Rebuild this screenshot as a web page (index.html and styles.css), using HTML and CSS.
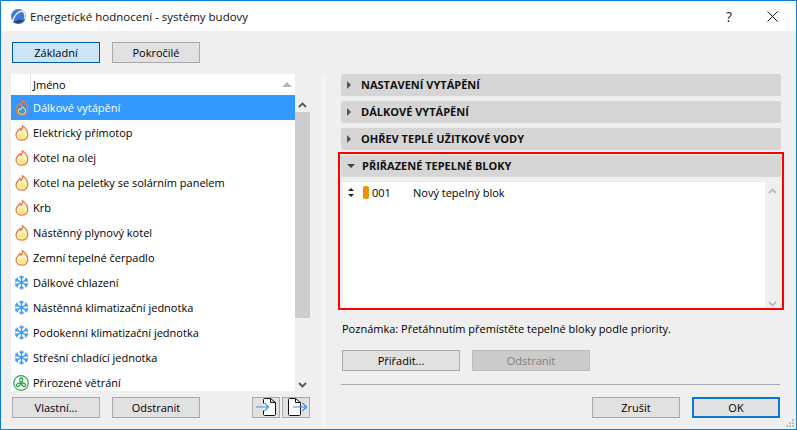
FILE: index.html
```html
<!DOCTYPE html>
<html lang="cs">
<head>
<meta charset="utf-8">
<title>Energetické hodnocení - systémy budovy</title>
<link rel="stylesheet" href="styles.css">
</head>
<body>
<svg class="defs" width="0" height="0" aria-hidden="true">
  <symbol id="flame" viewBox="0 0 16 18">
    <path d="M8.500 .8C9.300 3.400 7.600 4.600 6.900 5.800 6.500 5.200 6.200 4.700 6 4 3.600 6 1.200 8.400 1.200 11.300 1.200 14.800 4.100 17.200 7.700 17.200 11.400 17.200 14.600 14.800 14.600 11.100 14.600 7.200 11.800 3 8.500 .8Z" fill="#fff7d0" stroke="#e8784a" stroke-width="1.500"/>
    <path d="M8.300 7.500C8.600 9 7 9.800 6.300 10.900 5.700 10.500 5.500 10.200 5.300 9.800 4.200 10.800 3.700 11.800 3.700 12.800 3.700 14.900 5.500 16 7.800 16 10.200 16 12.200 14.800 12.200 12.500 12.200 10.700 10.300 8.700 8.300 7.500Z" fill="#ffe97a"/>
  </symbol>
  <symbol id="flame-sel" viewBox="0 0 16 18">
    <path d="M8.500 .8C9.300 3.400 7.600 4.600 6.900 5.800 6.500 5.200 6.200 4.700 6 4 3.600 6 1.200 8.400 1.200 11.300 1.200 14.800 4.100 17.200 7.700 17.200 11.400 17.200 14.600 14.800 14.600 11.100 14.600 7.200 11.800 3 8.500 .8Z" fill="#3a8fe0" stroke="#e8784a" stroke-width="1.500"/>
    <path d="M8.300 7.500C8.600 9 7 9.800 6.300 10.900 5.700 10.500 5.500 10.200 5.300 9.800 4.200 10.800 3.700 11.800 3.700 12.800 3.700 14.900 5.500 16 7.800 16 10.200 16 12.200 14.800 12.200 12.500 12.200 10.700 10.300 8.700 8.300 7.500Z" fill="#3a95ea" stroke="#f2d95a" stroke-width="1.200"/>
  </symbol>
  <symbol id="snow" viewBox="0 0 16 16">
    <g stroke="#3d9bf0" stroke-width="1.500" fill="none">
      <path d="M8 .5V15.500M1.500 4.300 14.500 11.700M14.500 4.300 1.500 11.700"/>
      <path d="M5.800 1.500 8 3.600 10.200 1.500M5.800 14.500 8 12.400 10.200 14.500M.9 6.800 3.900 5.800 3.200 2.800M15.100 9.200 12.100 10.200 12.800 13.200M15.100 6.800 12.100 5.800 12.800 2.800M.9 9.200 3.900 10.200 3.200 13.200"/>
    </g>
  </symbol>
  <symbol id="fan" viewBox="0 0 16 16">
    <circle cx="8" cy="8" r="7.300" fill="#fff" stroke="#2ea44f" stroke-width="1.200"/>
    <g fill="none" stroke="#2ea44f" stroke-width="1.300">
      <path d="M8 7.600C6.200 6.200 6.200 3.200 8.200 3 10.200 3 10.400 5.800 8 7.600Z"/>
      <path d="M8.300 8.200C10.400 7.600 12.800 8.600 12.600 10.400 12.200 12.200 9.400 12 8.300 8.200Z"/>
      <path d="M7.700 8.200C7.400 10.400 5.400 12.400 3.900 11.300 2.500 10 4.200 7.800 7.700 8.200Z"/>
    </g>
  </symbol>
</svg>

<div class="window">
  <header class="titlebar">
    <svg class="applogo" width="17" height="17" viewBox="0 0 17 17" aria-hidden="true">
      <circle cx="8.500" cy="8.500" r="7.500" fill="#3f78cf"/>
      <path d="M2.500 13.500C4 8.500 7.500 3.500 12 3 14.500 3.500 15.200 7 15 11" fill="none" stroke="#e8f0fa" stroke-width="1.500"/>
      <path d="M3 14.500C6 15.800 11 15.800 14 12.500L9 11.500Z" fill="#24447f"/>
    </svg>
    <span class="title">Energetické hodnocení - systémy budovy</span>
    <span class="help">?</span>
    <svg class="close" width="11" height="11" viewBox="0 0 11 11" aria-hidden="true"><path d="M.5 .5 10.500 10.500M10.500 .5 .5 10.500" stroke="#111" stroke-width="1" fill="none"/></svg>
  </header>

  <main class="content">
    <section class="left">
      <div class="tabs">
        <button class="btn tab active">Základní</button>
        <button class="btn tab">Pokročilé</button>
      </div>
      <div class="listwrap">
        <div class="list">
          <div class="listhead"><span class="headicon"></span><span class="headname">Jméno</span><span class="sortarrow"></span></div>
          <div class="row selected"><svg class="ic"><use href="#flame-sel"/></svg><span>Dálkové vytápění</span></div>
          <div class="row"><svg class="ic"><use href="#flame"/></svg><span>Elektrický přímotop</span></div>
          <div class="row"><svg class="ic"><use href="#flame"/></svg><span>Kotel na olej</span></div>
          <div class="row"><svg class="ic"><use href="#flame"/></svg><span>Kotel na peletky se solárním panelem</span></div>
          <div class="row"><svg class="ic"><use href="#flame"/></svg><span>Krb</span></div>
          <div class="row"><svg class="ic"><use href="#flame"/></svg><span>Nástěnný plynový kotel</span></div>
          <div class="row"><svg class="ic"><use href="#flame"/></svg><span>Zemní tepelné čerpadlo</span></div>
          <div class="row"><svg class="ic snowic"><use href="#snow"/></svg><span>Dálkové chlazení</span></div>
          <div class="row"><svg class="ic snowic"><use href="#snow"/></svg><span>Nástěnná klimatizační jednotka</span></div>
          <div class="row"><svg class="ic snowic"><use href="#snow"/></svg><span>Podokenní klimatizační jednotka</span></div>
          <div class="row"><svg class="ic snowic"><use href="#snow"/></svg><span>Střešní chladící jednotka</span></div>
          <div class="row"><svg class="ic fanic"><use href="#fan"/></svg><span>Přirozené větrání</span></div>
        </div>
        <div class="scroll leftscroll">
          <svg class="chev" width="9" height="6" viewBox="0 0 9 6"><path d="M1 5 4.500 1.500 8 5" fill="none" stroke="#555" stroke-width="1.800"/></svg>
          <div class="thumb"></div>
          <svg class="chev" width="9" height="6" viewBox="0 0 9 6"><path d="M1 1 4.500 4.500 8 1" fill="none" stroke="#555" stroke-width="1.800"/></svg>
        </div>
      </div>
      <div class="leftbtns">
        <button class="btn tab">Vlastní...</button>
        <button class="btn tab">Odstranit</button>
        <span class="iconbtns">
          <button class="btn iconbtn"><svg width="22" height="19" viewBox="0 0 22 19"><path d="M8.500 5.500V1.500C8.500 1 9 .5 9.500 .5H15.500L20.500 4.500V16.500C20.500 17 20 17.500 19.500 17.500H9.500C9 17.500 8.500 17 8.500 16.500V12.500M15.500 .5V4.500H20.500" fill="#fff" stroke="#111" stroke-width="1"/><path d="M1 9H13M9.500 5 13.500 9 9.500 13" fill="none" stroke="#3c8df0" stroke-width="1.200"/></svg></button>
          <button class="btn iconbtn"><svg width="24" height="19" viewBox="0 0 24 19"><path d="M11.500 .5H5.500C5 .5 4.500 1 4.500 1.500V16.500C4.500 17 5 17.500 5.500 17.500H15.500C16 17.500 16.500 17 16.500 16.500V4.500L11.500 .5V4.500H16.500" fill="#fff" stroke="#111" stroke-width="1"/><path d="M9 9H22M18.500 5 22.500 9 18.500 13" fill="none" stroke="#3c8df0" stroke-width="1.200"/></svg></button>
        </span>
      </div>
    </section>

    <div class="splitter"></div>

    <section class="right">
      <div class="acc"><i class="tri"></i>NASTAVENÍ VYTÁPĚNÍ</div>
      <div class="acc"><i class="tri"></i>DÁLKOVÉ VYTÁPĚNÍ</div>
      <div class="acc"><i class="tri"></i>OHŘEV TEPLÉ UŽITKOVÉ VODY</div>
      <div class="acc"><i class="tri open"></i>PŘIŘAZENÉ TEPELNÉ BLOKY</div>
      <div class="assigned">
        <div class="blocks">
          <div class="block">
            <span class="updown"></span>
            <span class="swatch"></span>
            <span class="code">001</span>
            <span>Nový tepelný blok</span>
          </div>
        </div>
        <div class="scroll blockscroll">
          <svg class="chev" width="9" height="6" viewBox="0 0 9 6"><path d="M1 5 4.500 1.500 8 5" fill="none" stroke="#bbb" stroke-width="1.800"/></svg>
          <svg class="chev" width="9" height="6" viewBox="0 0 9 6"><path d="M1 1 4.500 4.500 8 1" fill="none" stroke="#bbb" stroke-width="1.800"/></svg>
        </div>
      </div>
      <p class="note">Poznámka: Přetáhnutím přemístěte tepelné bloky podle priority.</p>
      <div class="assignbtns">
        <button class="btn wide">Přiřadit...</button>
        <button class="btn wide disabled">Odstranit</button>
      </div>
      <hr class="sep">
      <div class="dialogbtns">
        <button class="btn tab">Zrušit</button>
        <button class="btn tab primary">OK</button>
      </div>
      <div class="redframe"></div>
    </section>
  </main>
  <svg class="grip" width="10" height="10" viewBox="0 0 10 10" aria-hidden="true"><path d="M7 1h2v2H7zM4 4h2v2H4zM7 4h2v2H7zM1 7h2v2H1zM4 7h2v2H4zM7 7h2v2H7z" fill="#bdbdbd"/></svg>
</div>
</body>
</html>
```

FILE: styles.css
```css
* { box-sizing: border-box; }
html, body { margin: 0; padding: 0; }
body {
  width: 797px;
  height: 430px;
  overflow: hidden;
  font-family: "Open Sans", "Noto Sans", sans-serif;
  font-size: 11px;
  color: #000;
}
.defs { position: absolute; }
.window {
  position: relative;
  width: 797px;
  height: 430px;
  border: 1px solid #0f7fd6;
  background: #efefef;
  display: flex;
  flex-direction: column;
}
.titlebar {
  height: 30px;
  flex: none;
  background: #fff;
  display: flex;
  align-items: center;
  padding: 0 18px 0 9px;
}
.applogo { margin-right: 3px; }
.title { font-size: 11.5px; flex: 1; color: #111; }
.help { font-size: 14px; margin-right: 35px; color: #222; }
.content {
  flex: 1;
  display: flex;
  min-height: 0;
}
.left {
  width: 320px;
  flex: none;
  padding: 11px 0 0 10px;
}
.splitter {
  width: 5px;
  flex: none;
  margin-top: 43px;
  background: #f4f4f4;
}
.tabs, .leftbtns { display: flex; gap: 12px; padding-left: 1px; }
.btn {
  width: 88px;
  height: 21px;
  padding: 0;
  border: 1px solid #a9a9a9;
  background: #e1e1e1;
  font: inherit;
  font-size: 11px;
  color: #000;
  display: inline-flex;
  align-items: center;
  justify-content: center;
}
.active { background: #cce4f7; border-color: #005a9e; }
.listwrap {
  display: flex;
  height: 317px;
  margin-top: 11px;
  width: 299px;
}
.list { width: 284px; background: #fff; overflow: hidden; }
.listhead {
  height: 21px;
  display: flex;
  align-items: center;
  width: 283px;
}
.headicon { width: 20px; height: 100%; border-right: 1px solid #e5e5e5; }
.headname { flex: 1; padding-left: 2px; }
.sortarrow {
  width: 0; height: 0;
  margin-right: 2px;
  border-left: 5px solid transparent;
  border-right: 5px solid transparent;
  border-bottom: 5px solid #b5b5b5;
}
.row {
  height: 25px;
  display: flex;
  align-items: center;
  padding-left: 3px;
}
.row span { margin-left: 3px; }
.selected { background: #3399ff; color: #fff; }
.ic { width: 14px; height: 16px; flex: none; margin-left: 1px; margin-right: 1px; }
.snowic { width: 15px; height: 15px; margin-left: 0; margin-right: 1px; }
.fanic { width: 16px; height: 16px; margin-left: -1px; margin-right: 1px; }
.scroll {
  display: flex;
  flex-direction: column;
  align-items: center;
  justify-content: space-between;
  width: 15px;
}
.leftscroll { height: 317px; padding: 28px 0 3px; }
.thumb {
  width: 15px;
  background: #cdcdcd;
  height: 206px;
  margin-bottom: auto;
  margin-top: 4px;
}
.leftbtns { margin-top: 6px; align-items: center; }
.iconbtns { display: flex; gap: 2px; margin-left: 40px; }
.iconbtn { width: 28px; height: 21px; }
.right {
  position: relative;
  flex: 1;
  padding: 43px 15px 0 15px;
  min-width: 0;
}
.acc {
  height: 22px;
  margin-bottom: 5px;
  padding: 0 0 1px 6px;
  background: #d6d6d6;
  border-radius: 2px;
  font-weight: 700;
  font-size: 11px;
  color: #111;
  display: flex;
  align-items: center;
}
.tri {
  width: 0; height: 0;
  margin-right: 10px;
  border-top: 4px solid transparent;
  border-bottom: 4px solid transparent;
  border-left: 4px solid #555;
}
.tri.open {
  margin-right: 7px;
  border: 0;
  border-left: 4px solid transparent;
  border-right: 4px solid transparent;
  border-top: 4px solid #444;
}
.assigned {
  display: flex;
  height: 128px;
  margin: 0 0 0 2px;
}
.blocks { width: 422px; background: #fff; }
.block {
  height: 21px;
  display: flex;
  align-items: center;
  padding-left: 5px;
}
.updown {
  position: relative;
  width: 7px;
  height: 9px;
  margin-right: 8px;
}
.updown::before, .updown::after {
  content: "";
  position: absolute;
  left: 0;
  border-left: 3px solid transparent;
  border-right: 3px solid transparent;
}
.updown::before { top: 0; border-bottom: 3px solid #222; }
.updown::after { bottom: 0; border-top: 3px solid #222; }
.swatch {
  width: 6px;
  height: 13px;
  background: #ea9407;
  border-radius: 2px;
  margin-right: 3px;
}
.code { width: 41px; }
.blockscroll { padding: 6px 0 3px; width: 15px; }
.note { margin: 11px 0 0 1px; line-height: 16px; font-size: 11px; }
.assignbtns { display: flex; gap: 12px; margin: 13px 0 0 1px; }
.wide { width: 118px; }
.disabled { background: #cbcbcb; border-color: #bdbdbd; color: #808080; }
.sep { border: 0; border-top: 1px solid #a9a9a9; margin: 13px 1px 0 0; }
.dialogbtns { display: flex; justify-content: flex-end; gap: 12px; margin: 12px 1px 0 0; }
.primary { border: 2px solid #0a78d7; }
.redframe {
  position: absolute;
  left: 12px;
  top: 121px;
  width: 446px;
  height: 158px;
  border: 2px solid #f00;
  pointer-events: none;
}
.grip { position: absolute; right: 1px; bottom: 1px; }
```
